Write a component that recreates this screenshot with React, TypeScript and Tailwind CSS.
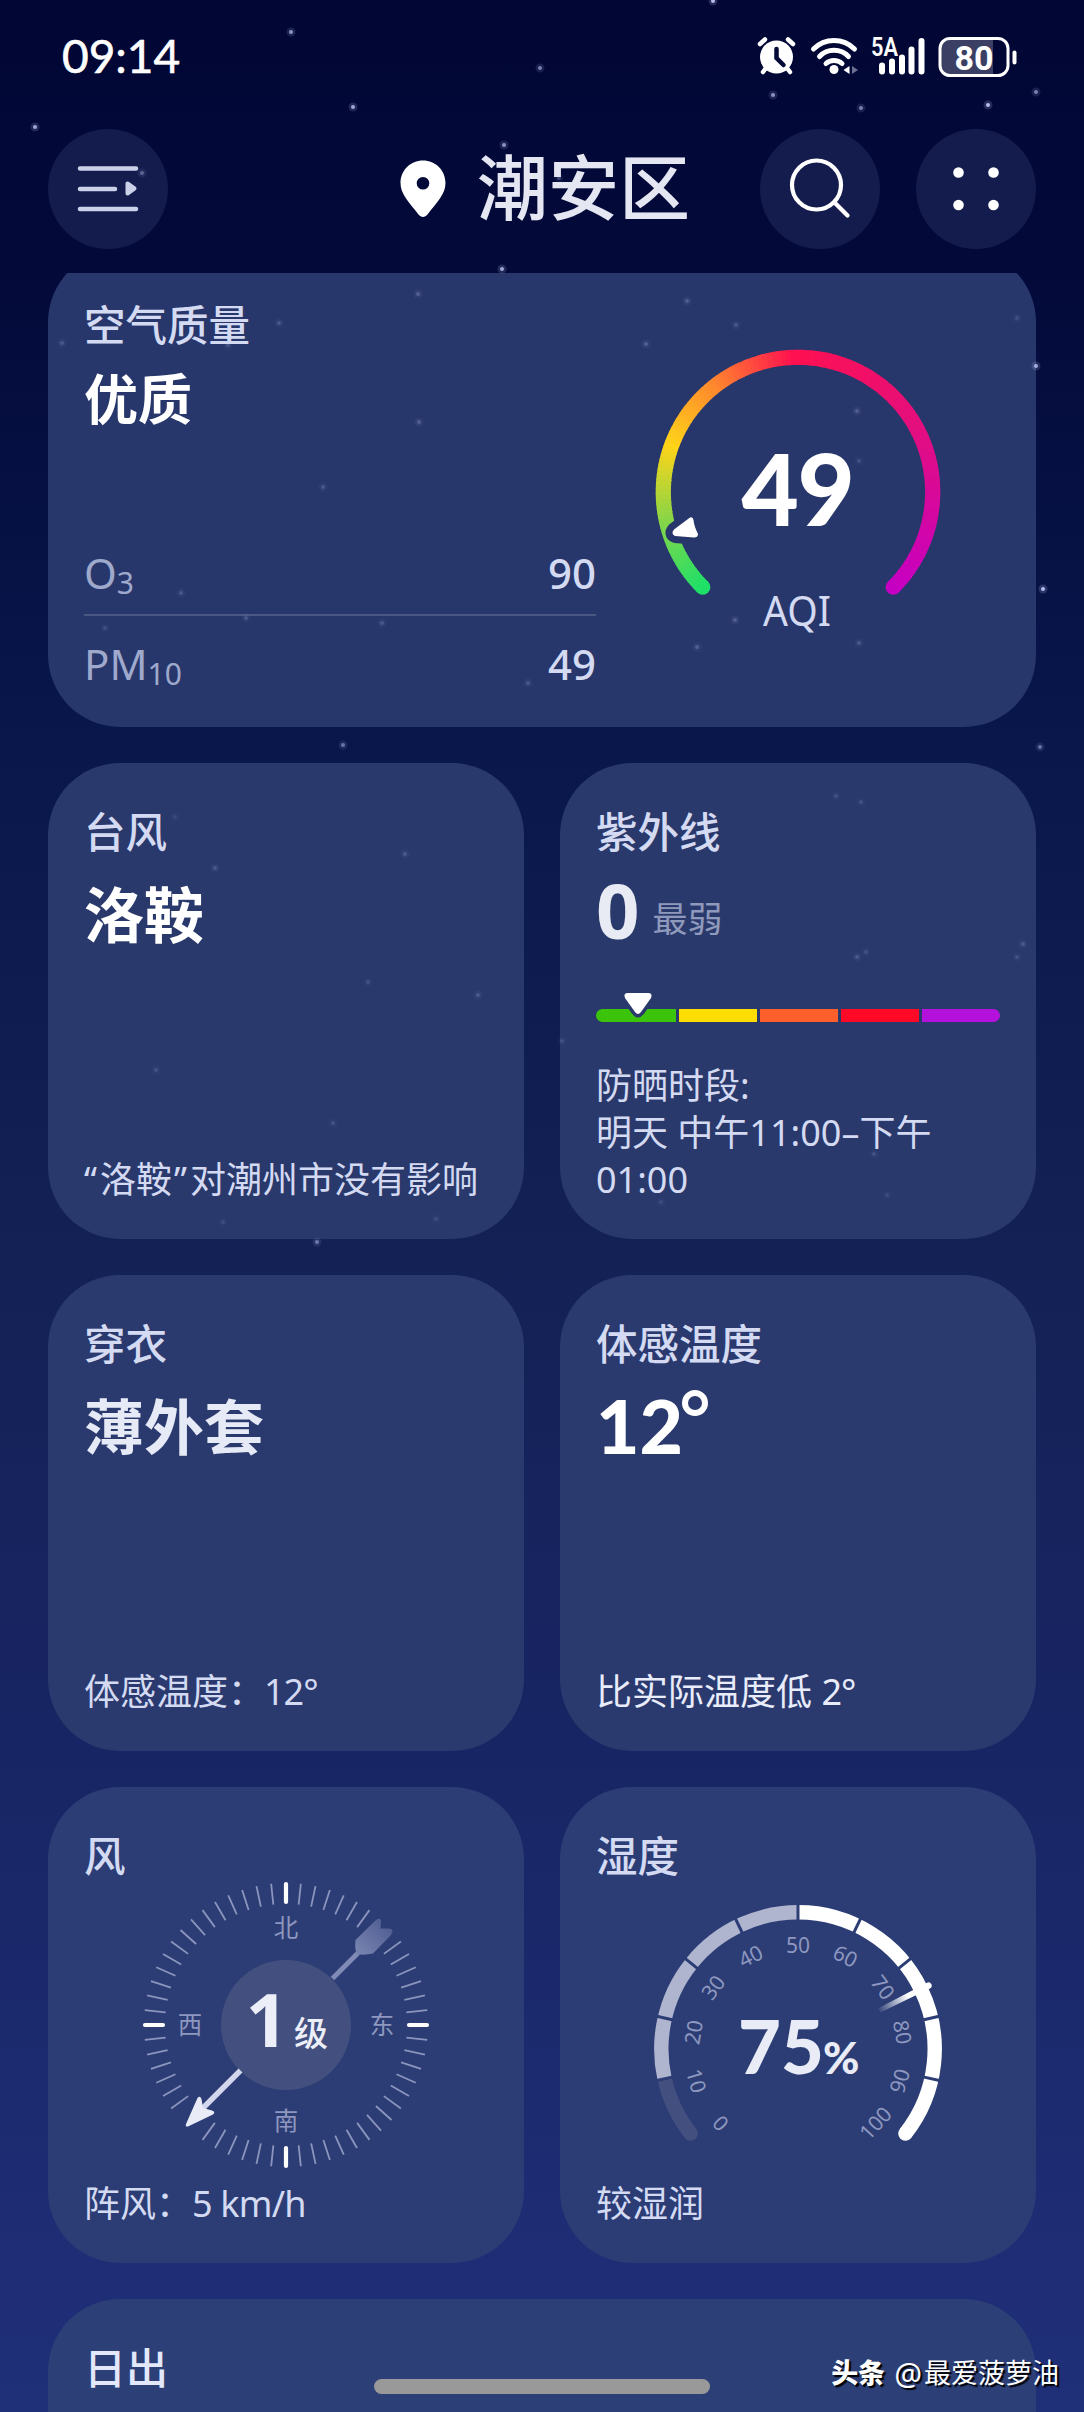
import React from 'react';

const NUM_FONT = 'Lato, "Noto Sans", sans-serif';

const polar = (cx: number, cy: number, r: number, deg: number) => {
  const a = (deg * Math.PI) / 180;
  return { x: cx + r * Math.cos(a), y: cy + r * Math.sin(a) };
};

const arc = (cx: number, cy: number, r: number, from: number, to: number) => {
  const s = polar(cx, cy, r, from);
  const e = polar(cx, cy, r, to);
  return `M${s.x} ${s.y}A${r} ${r} 0 ${to - from > 180 ? 1 : 0} 1 ${e.x} ${e.y}`;
};

// x, y, opacity
const stars: [number, number, number][] = [
  [713, 1, 0.9], [291, 32, 0.7], [540, 68, 0.6], [353, 107, 0.8], [35, 127, 0.8],
  [773, 95, 0.7], [861, 108, 0.6], [988, 105, 0.9], [1036, 92, 0.6], [504, 145, 0.7],
  [142, 173, 0.4], [559, 178, 0.3], [502, 269, 0.8], [418, 294, 0.25], [687, 301, 0.25],
  [279, 323, 0.2], [736, 325, 0.2], [62, 343, 0.2], [646, 344, 0.25], [228, 345, 0.2],
  [1017, 318, 0.15], [1036, 366, 0.8], [419, 422, 0.25], [857, 411, 0.25], [323, 487, 0.2],
  [859, 461, 0.15], [181, 593, 0.2], [1043, 589, 0.9], [246, 618, 0.2], [382, 623, 0.2],
  [105, 628, 0.15], [735, 620, 0.25], [697, 647, 0.25], [859, 643, 0.2], [528, 683, 0.2],
  [343, 745, 0.5], [1040, 747, 0.5], [836, 796, 0.15], [861, 802, 0.15], [175, 817, 0.1],
  [405, 854, 0.2], [215, 868, 0.2], [857, 957, 0.2], [866, 952, 0.15], [1023, 944, 0.2],
  [1017, 957, 0.15], [368, 982, 0.15], [478, 995, 0.2], [562, 1041, 0.15], [156, 1070, 0.15],
  [333, 1123, 0.15], [874, 1154, 0.15], [887, 1195, 0.12], [661, 1202, 0.12], [436, 1219, 0.12],
  [223, 1222, 0.12], [317, 1242, 0.5],
];

const Stars: React.FC = () => (
  <svg className="pointer-events-none absolute inset-0" width="1084" height="2412">
    {stars.map(([x, y, o]) => (
      <g key={`${x}-${y}`} fill="#c9d0ff" opacity={o}>
        <circle cx={x} cy={y} r="4.5" opacity="0.2" />
        <circle cx={x} cy={y} r="2" />
      </g>
    ))}
  </svg>
);

const StatusBar: React.FC = () => (
  <div className="flex h-[112px] items-center justify-between pl-[62px] pr-[66px]">
    <span className="text-[46px] leading-none text-white [-webkit-text-stroke:0.6px_#fff]" style={{ fontFamily: NUM_FONT }}>
      09:14
    </span>
    <svg width="262" height="60" viewBox="756 26 262 60" fill="none" stroke="#fff" strokeLinecap="round">
      {/* alarm */}
      <circle cx="776.5" cy="57" r="16.5" fill="#fff" stroke="none" />
      <path d="M760 44l5-4.5M793 44l-5-4.5" strokeWidth="4.5" />
      <path d="M766 68l-3 4M787 68l3 4" strokeWidth="4.5" />
      <path d="M776.5 49v9l7 7" stroke="#030a38" strokeWidth="4.5" />
      {/* wifi */}
      <path d="M813.500 49a29 29 0 0 1 41 0" strokeWidth="5" />
      <path d="M819.500 56.500a20 20 0 0 1 29 0" strokeWidth="5" />
      <path d="M826 63.500a12 12 0 0 1 16 0" strokeWidth="5" />
      <circle cx="834" cy="69.500" r="4.500" fill="#fff" stroke="none" />
      <path d="M849.500 66v8l-6-4z" fill="#fff" stroke="none" />
      <path d="M852 66v8l6-4z" fill="#6b7092" stroke="none" />
      {/* signal */}
      <text x="871" y="55.500" fontSize="25" fontWeight="600" fill="#fff" stroke="none" fontFamily="Roboto, sans-serif" textLength="27" lengthAdjust="spacingAndGlyphs">
        5A
      </text>
      <path d="M882 65.500v6M892 61.500v10M902 57.500v14M911.500 49.500v22M921.500 41v30.500" strokeWidth="6" />
      {/* battery */}
      <path d="M950 40h43v34h-43a8 8 0 0 1-9-8v-18a8 8 0 0 1 9-8z" fill="#3b3f63" stroke="none" />
      <rect x="940" y="38.500" width="68" height="37" rx="10" strokeWidth="3" />
      <path d="M1014.500 52.500v10" strokeWidth="4" />
      <text x="974" y="69.500" fontSize="34" fontWeight="700" fill="#fff" stroke="none" fontFamily="Roboto, sans-serif" textAnchor="middle">
        80
      </text>
    </svg>
  </div>
);

const RoundButton: React.FC<{ children: React.ReactNode }> = ({ children }) => (
  <button className="flex size-[120px] items-center justify-center rounded-full bg-[#131c4d]">
    <svg width="120" height="120" viewBox="0 0 120 120" fill="none">
      {children}
    </svg>
  </button>
);

const Header: React.FC = () => (
  <div className="flex h-[161px] items-start justify-between px-12 pt-[17px]">
    <RoundButton>
      <g stroke="#ccd1ea" strokeWidth="4.500" strokeLinecap="round">
        <path d="M32 39.500h56M32 60h35M32 80h56" />
        <path d="M79.500 54.500v10l7-5z" fill="#ccd1ea" strokeWidth="4" strokeLinejoin="round" />
      </g>
    </RoundButton>
    <div className="flex items-start">
      <div className="mr-[70px] flex h-[120px] items-center">
        <svg width="46" height="58" viewBox="0 0 46 58" className="mr-[31px]">
          <path
            d="M23 0.500C10.500 0.500 0.500 10.300 0.500 23c0 11 8 18.500 18 31.500 2.500 3.300 6.500 3.300 9 0C37.500 41.500 45.500 34 45.500 23 45.500 10.300 35.500 0.500 23 0.500zM23 17a6.300 6.300 0 1 1 0 12.600A6.300 6.300 0 0 1 23 17z"
            fill="#fff"
            fillRule="evenodd"
          />
        </svg>
        <h1 className="pb-1 text-[71px] font-medium leading-[116px] text-[#e4e6f2]">潮安区</h1>
      </div>
      <RoundButton>
        <g stroke="#fff" strokeWidth="4.200" strokeLinecap="round">
          <circle cx="56.500" cy="56" r="24.500" />
          <path d="M74.500 73.500L87.500 86.500" />
        </g>
      </RoundButton>
      <div className="ml-9">
        <RoundButton>
          <g fill="#fff">
            <circle cx="42.500" cy="43.500" r="5.300" />
            <circle cx="77.500" cy="43.500" r="5.300" />
            <circle cx="42.500" cy="76" r="5.300" />
            <circle cx="77.500" cy="76" r="5.300" />
          </g>
        </RoundButton>
      </div>
    </div>
  </div>
);

const CardTitle: React.FC<{ children: React.ReactNode }> = ({ children }) => (
  <h2 className="text-[41.5px] font-medium leading-[66px] text-[#d3daf2]">{children}</h2>
);

const CardFooter: React.FC<{ children: React.ReactNode }> = ({ children }) => (
  <p className="mt-auto whitespace-nowrap text-[36px] leading-[47px] text-[#d3daf2]">{children}</p>
);

const Card: React.FC<{ className?: string; children: React.ReactNode }> = ({ className = '', children }) => (
  <section className={`relative flex h-[476px] flex-col rounded-[72px] p-9 ${className}`}>{children}</section>
);

const aqiStops: [number, number[]][] = [
  [135, [30, 224, 105]],
  [165, [125, 214, 75]],
  [200, [255, 212, 25]],
  [232, [255, 135, 45]],
  [268, [255, 16, 80]],
  [330, [228, 15, 125]],
  [405, [198, 0, 195]],
];

const aqiColor = (deg: number) => {
  for (let i = 1; i < aqiStops.length; i++) {
    const [d1, c1] = aqiStops[i];
    if (deg <= d1) {
      const [d0, c0] = aqiStops[i - 1];
      const t = (deg - d0) / (d1 - d0);
      return `rgb(${c0.map((v, k) => Math.round(v + (c1[k] - v) * t)).join(',')})`;
    }
  }
  return 'rgb(198,0,195)';
};

const AqiGauge: React.FC = () => {
  const start = polar(150, 150, 134.7, 135);
  const end = polar(150, 150, 134.7, 45);
  const steps = Array.from({ length: 135 }, (_, i) => 135 + i * 2);

  return (
    <svg width="300" height="300" viewBox="0 0 300 300">
      <circle cx={start.x} cy={start.y} r="7.600" fill={aqiColor(135)} />
      <circle cx={end.x} cy={end.y} r="7.600" fill={aqiColor(405)} />
      {steps.map((d) => (
        <path
          key={d}
          d={arc(150, 150, 134.7, d, Math.min(d + 2.4, 405))}
          fill="none"
          stroke={aqiColor(d + 1)}
          strokeWidth="15.200"
        />
      ))}
      <path
        d="M26 187.500L42 175.500Q45 174.500 45.500 178Q46 184 50 192Q50 195.500 46 195.500L27 194Q22.500 191.500 26 187.500z"
        fill="#fff"
        stroke="#28376b"
        strokeWidth="14"
        strokeLinejoin="round"
        paintOrder="stroke"
      />
      <text x="149.500" y="183.500" textAnchor="middle" fontSize="99" fontWeight="900" fill="#fff" fontFamily={NUM_FONT} letterSpacing="-1.500">
        49
      </text>
      <text x="149" y="284" textAnchor="middle" fontSize="41" fill="#d3daf2" textLength="68" lengthAdjust="spacingAndGlyphs">
        AQI
      </text>
    </svg>
  );
};

const AirQualityCard: React.FC = () => (
  <div className="h-[454px] overflow-hidden">
    <section className="-mt-[23px] flex h-[477px] rounded-[72px] bg-[#28376b] pb-[15px] pl-9 pt-[42px]">
      <div className="flex w-[512px] flex-col">
        <CardTitle>空气质量</CardTitle>
        <p className="text-[54px] font-bold leading-[83px] text-white">优质</p>
        <div className="mt-auto flex h-[84px] items-center justify-between border-b-2 border-[#4a5782] text-[42px]">
          <span className="leading-none text-[#9fa9cb]">
            O<sub className="bottom-[-5px] text-[30px]">3</sub>
          </span>
          <span className="font-medium leading-none text-[#d3daf2]">90</span>
        </div>
        <div className="flex h-[96px] items-center justify-between text-[42px]">
          <span className="leading-none text-[#9fa9cb]">
            PM<sub className="bottom-[-5px] text-[30px]">10</sub>
          </span>
          <span className="font-medium leading-none text-[#d3daf2]">49</span>
        </div>
      </div>
      <div className="ml-[52px] mt-[50px]">
        <AqiGauge />
      </div>
    </section>
  </div>
);

const UvBar: React.FC = () => (
  <div className="relative mt-[54px] flex h-[13px] gap-[3px] overflow-visible">
    <div className="flex-[1.03] rounded-l-full bg-[#3cc40c]" />
    <div className="flex-1 bg-[#ffdd00]" />
    <div className="flex-1 bg-[#ff5f2a]" />
    <div className="flex-1 bg-[#ff0a26]" />
    <div className="flex-1 rounded-r-full bg-[#b412dc]" />
    <svg className="absolute -top-[20px] left-[22px]" width="40" height="36" viewBox="0 0 40 36">
      <path
        d="M10 4h20q5 0 3 5l-10 14q-3 4-6 0L7 9q-2-5 3-5z"
        fill="#fff"
        stroke="#2a396c"
        strokeWidth="7"
        paintOrder="stroke"
      />
    </svg>
  </div>
);

const WindCompass: React.FC = () => {
  // ticks under the arrow's head and tail are left out
  const hidden = [42, 48, 222, 228];
  const ticks = Array.from({ length: 60 }, (_, i) => i * 6).filter((d) => !hidden.includes(d));

  return (
    <svg className="absolute left-[88px] top-[88px]" width="300" height="300" viewBox="-150 -150 300 300">
      <defs>
        <linearGradient id="tail" x1="45" y1="-45" x2="104" y2="-104" gradientUnits="userSpaceOnUse">
          <stop offset="0" stopColor="#8490b8" />
          <stop offset="0.5" stopColor="#7481ad" />
          <stop offset="1" stopColor="#4d5a90" />
        </linearGradient>
      </defs>
      {ticks.map((d) =>
        d % 90 === 0 ? (
          <path key={d} d="M0 -123V-141" stroke="#fff" strokeWidth="4.200" strokeLinecap="round" transform={`rotate(${d})`} />
        ) : (
          <path key={d} d="M0 -121V-142" stroke="#8b95bd" strokeWidth="1.800" transform={`rotate(${d})`} />
        )
      )}
      <circle r="65" fill="#43507f" />
      <path d="M46.500 -46.500L72 -72" stroke="#7f8bb4" strokeWidth="5" />
      <path
        d="M69.500 -85L90 -105Q95 -109 95 -103L94.500 -96.500L103 -96.500Q109 -96 105 -90L87 -71.500Q78 -69.500 71 -71Q68.500 -75 69.500 -85z"
        fill="url(#tail)"
      />
      <path d="M-45.500 45.500L-84 84" stroke="#d3d7ee" strokeWidth="5.500" />
      <path
        d="M-100 99L-88.500 73Q-86 70 -84.500 74L-83 83L-74 85.500Q-70 87 -73 89.500L-98 101.500Q-101 102 -100 99z"
        fill="#e9ebf6"
      />
      <g fontSize="24.500" fill="#8d97bf" textAnchor="middle">
        <text x="0" y="-88">北</text>
        <text x="0" y="105">南</text>
        <text x="-96" y="8.500">西</text>
        <text x="96" y="8.500">东</text>
      </g>
      <text x="-19" y="22" fontSize="74" fontWeight="700" fill="#eceef8" textAnchor="middle" fontFamily="&quot;Noto Sans&quot;, sans-serif">
        1
      </text>
      <text x="25" y="20.500" fontSize="34" fontWeight="500" fill="#eceef8" textAnchor="middle">
        级
      </text>
    </svg>
  );
};

const HumidityGauge: React.FC = () => {
  const angleOf = (v: number) => 270 + ((v - 50) / 10) * 25.64;
  // numbers are spread slightly wider than the segments
  const labelAngle = (v: number) => 270 + ((v - 50) / 10) * 26.6;
  const labels = Array.from({ length: 11 }, (_, i) => i * 10);
  const capStart = polar(0, 0, 136.7, angleOf(0));
  const capEnd = polar(0, 0, 136.7, angleOf(100));

  return (
    <svg className="absolute left-[78px] top-[102px]" width="320" height="290" viewBox="-160 -160 320 290">
      <defs>
        <linearGradient id="needle" x1="88" y1="0" x2="122" y2="0" gradientUnits="userSpaceOnUse">
          <stop offset="0" stopColor="#fff" stopOpacity="0" />
          <stop offset="1" stopColor="#fff" />
        </linearGradient>
      </defs>
      <circle cx={capStart.x} cy={capStart.y} r="7.200" fill="#43507f" />
      <circle cx={capEnd.x} cy={capEnd.y} r="7.200" fill="#fff" />
      <g fill="none" strokeWidth="14.400">
        <path d={arc(0, 0, 136.7, angleOf(0), angleOf(10))} stroke="#43507f" />
        <path d={arc(0, 0, 136.7, angleOf(10), angleOf(50))} stroke="#afb4cf" />
        <path d={arc(0, 0, 136.7, angleOf(50), angleOf(100))} stroke="#fff" />
      </g>
      {labels.slice(1, -1).map((v) => (
        <path key={v} d="M127 0H146" stroke="#2c3d75" strokeWidth="3" transform={`rotate(${angleOf(v)})`} />
      ))}
      {labels.map((v) => {
        const p = polar(0, 2, 106, labelAngle(v));
        // numbers below the horizontal are turned round so they stay readable
        const turn = v < 15 || v > 85 ? labelAngle(v) - 90 : labelAngle(v) - 270;
        return (
          <text
            key={v}
            fontSize="21"
            fill="#8d97bf"
            textAnchor="middle"
            transform={`translate(${p.x} ${p.y}) rotate(${turn})`}
            y="7.500"
          >
            {v}
          </text>
        );
      })}
      <path
        d="M90 -1.500L145 -3.200a3 3 0 0 1 0 6.400L90 3z"
        fill="url(#needle)"
        transform={`rotate(${angleOf(75)})`}
      />
      <text x="-60" y="24.500" fontSize="74" fontWeight="900" fill="#e9ebf6" fontFamily={NUM_FONT}>
        75
      </text>
      <text x="25" y="24.500" fontSize="44" fontWeight="900" fill="#e9ebf6" fontFamily={NUM_FONT}>
        %
      </text>
    </svg>
  );
};

const App: React.FC = () => {
  return (
    <div
      className="relative h-[2412px] w-[1084px] overflow-hidden bg-[linear-gradient(180deg,#010634_0%,#030a3a_11%,#09174b_31%,#142155_52%,#182564_72%,#1e2d75_94%,#1f2f78_100%)]"
      style={{ fontFamily: '"Noto Sans", "Noto Sans CJK SC", sans-serif' }}
    >
      <StatusBar />
      <Header />

      <main className="flex flex-col gap-9 px-12">
        <AirQualityCard />

        <div className="grid grid-cols-2 gap-9">
          <Card className="bg-[#2a396c]">
            <CardTitle>台风</CardTitle>
            <p className="text-[60px] font-bold leading-[100px] text-white">洛鞍</p>
            <CardFooter>
              <span className="tracking-[3px]">“</span>洛鞍<span className="ml-[2px] tracking-[3px]">”</span>对潮州市没有影响
            </CardFooter>
          </Card>

          <Card className="bg-[#2a396c]">
            <CardTitle>紫外线</CardTitle>
            <div className="flex h-[90px] items-start">
              <span className="font-['Open_Sans'] text-[76px] font-bold leading-[90px] text-[#e9ebf4]">0</span>
              <span className="ml-[13px] text-[35px] leading-[108px] text-[#8f99bb]">最弱</span>
            </div>
            <UvBar />
            <CardFooter>
              防晒时段:
              <br />
              明天 中午11:00–下午
              <br />
              01:00
            </CardFooter>
          </Card>

          <Card className="bg-[#2b3a6e]">
            <CardTitle>穿衣</CardTitle>
            <p className="text-[60px] font-semibold leading-[100px] text-[#e6e9f6]">薄外套</p>
            <CardFooter>
              体感温度：<span className="tracking-[-1px]">12°</span>
            </CardFooter>
          </Card>

          <Card className="bg-[#2b3a6e]">
            <CardTitle>体感温度</CardTitle>
            <div className="flex h-[100px] items-start">
              <span className="text-[75px] font-black leading-[96px] text-white" style={{ fontFamily: NUM_FONT }}>
                12
              </span>
              <span className="-ml-px mt-[13px] size-[26px] rounded-full border-[6px] border-white" />
            </div>
            <p className="mt-auto text-[36px] leading-[47px] text-[#e8ecfb]">
              比实际温度低 <span className="tracking-[-1px]">2°</span>
            </p>
          </Card>

          <Card className="bg-[#2c3d75]">
            <CardTitle>风</CardTitle>
            <WindCompass />
            <CardFooter>
              阵风：<span className="tracking-[-0.8px]">5 km/h</span>
            </CardFooter>
          </Card>

          <Card className="bg-[#2c3d75]">
            <CardTitle>湿度</CardTitle>
            <HumidityGauge />
            <CardFooter>较湿润</CardFooter>
          </Card>
        </div>

        <Card className="bg-[#2d3f77]">
          <h2 className="text-[42px] font-medium leading-[66px] text-[#e2e7fa]">日出</h2>
        </Card>
      </main>

      <Stars />

      <div className="absolute bottom-[18px] left-[374px] h-[15px] w-[336px] rounded-full bg-[#999999]" />
      <div className="absolute right-[25px] top-[2353px] flex items-center whitespace-nowrap text-[27px] leading-[40px] text-white [text-shadow:2px_2px_1px_#000]">
        <span className="mr-[9px] font-black">头条</span>
        <span className="mr-[2px] text-[31px]">@</span>
        <span>最爱菠萝油</span>
      </div>
    </div>
  );
};

export default App;
